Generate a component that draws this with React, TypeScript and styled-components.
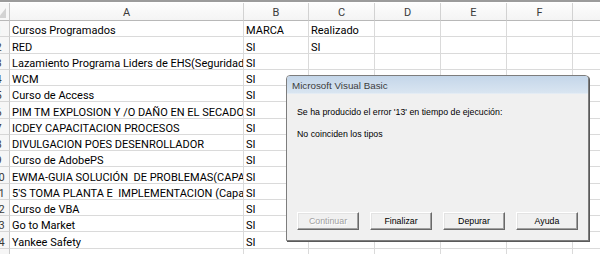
import React from 'react'
import styled, { createGlobalStyle } from 'styled-components'

const GlobalStyle = createGlobalStyle`
  html, body {
    margin: 0;
    padding: 0;
    background: #ffffff;
  }
  body {
    font-family: Roboto, 'Liberation Sans', Arial, sans-serif;
    overflow: hidden;
  }
`

const Sheet = styled.div`
  position: relative;
  width: 600px;
  height: 254px;
  overflow: hidden;
  background: #ffffff;
`

const TopBar = styled.div`
  height: 2px;
  background: #9b9b9b;
  margin-bottom: 1px;
`

const Grid = styled.div`
  display: grid;
  grid-template-columns: 22px 234px 65px 66px 66px 66px 66px 66px;
  grid-template-rows: 18px;
  grid-auto-rows: 16.25px;
  margin-left: -12px;
  width: 651px;
`

const Corner = styled.div`
  display: flex;
  align-items: flex-end;
  justify-content: flex-end;
  padding: 0 3px 2px 0;
  background: #f7f7f7;
  border-right: 1px solid #c9c9c9;
  border-bottom: 1px solid #b8b8b8;
  box-sizing: border-box;
`

const CornerMark = styled.div`
  width: 8px;
  height: 10px;
  background: #d3d3d3;
  clip-path: polygon(100% 0, 100% 100%, 0 100%);
`

const ColHead = styled.div`
  display: flex;
  align-items: center;
  justify-content: center;
  padding-top: 2px;
  font-size: 11px;
  color: #3a3a3a;
  background: linear-gradient(#fdfdfd, #f4f4f4);
  border-right: 1px solid #d2d2d2;
  border-bottom: 1px solid #b8b8b8;
  box-sizing: border-box;
`

const RowHead = styled.div`
  display: flex;
  align-items: flex-end;
  justify-content: center;
  font-size: 11px;
  line-height: 11px;
  color: #3a3a3a;
  background: #f6f6f6;
  border-right: 1px solid #c9c9c9;
  border-bottom: 1px solid #d6d6d6;
  box-sizing: border-box;
`

const Cell = styled.div`
  display: flex;
  align-items: flex-end;
  padding-left: 2px;
  font-size: 11px;
  line-height: 11px;
  color: #000000;
  white-space: pre;
  overflow: hidden;
  border-right: 1px solid #dadada;
  border-bottom: 1px solid #dadada;
  box-sizing: border-box;
`

const Dialog = styled.div`
  position: absolute;
  left: 286px;
  top: 75px;
  width: 303px;
  height: 166px;
  display: flex;
  flex-direction: column;
  box-sizing: border-box;
  border: 1px solid #7d7d7d;
  border-radius: 4px 4px 0 0;
  box-shadow: 1px 1px 0 #5a5a5a;
  background: #f0f0f0;
  overflow: hidden;
  font-family: 'Liberation Sans', Arial, sans-serif;
`

const TitleBar = styled.div`
  height: 18px;
  display: flex;
  align-items: center;
  padding: 1px 0 0 5px;
  box-sizing: border-box;
  font-size: 9.8px;
  color: #3c3c3c;
  background: linear-gradient(#c4d6e9, #d9e5f1);
  border-bottom: 1px solid #e4ecf4;
`

const Body = styled.div`
  flex: 1;
  display: flex;
  flex-direction: column;
  padding: 12px 10px 10px 10px;
  font-size: 8.8px;
  color: #000000;
`

const Message = styled.div<{ gap?: number }>`
  line-height: 12px;
  margin-bottom: ${(p) => p.gap ?? 0}px;
`

const Buttons = styled.div`
  margin-top: auto;
  display: flex;
  gap: 11px;
`

const Button = styled.div<{ disabled?: boolean }>`
  width: 62px;
  height: 18px;
  display: flex;
  align-items: center;
  justify-content: center;
  box-sizing: border-box;
  background: #f0f0f0;
  border-top: 1px solid #ffffff;
  border-left: 1px solid #ffffff;
  border-right: 1px solid #696969;
  border-bottom: 1px solid #696969;
  box-shadow: inset -1px -1px 0 #a0a0a0, inset 1px 1px 0 #e3e3e3;
  font-size: 8.8px;
  color: ${(p) => (p.disabled ? '#a0a0a0' : '#000000')};
  text-shadow: ${(p) => (p.disabled ? '1px 1px 0 #ffffff' : 'none')};
`

const columns = ['A', 'B', 'C', 'D', 'E', 'F', 'G']

const rows: string[][] = [
  ['Cursos Programados', 'MARCA', 'Realizado'],
  ['RED', 'SI', 'SI'],
  ['Lazamiento Programa Liders de EHS(Seguridad)', 'SI'],
  ['WCM', 'SI'],
  ['Curso de Access', 'SI'],
  ['PIM TM EXPLOSION Y /O DAÑO EN EL SECADOR', 'SI'],
  ['ICDEY CAPACITACION PROCESOS', 'SI'],
  ['DIVULGACION POES DESENROLLADOR', 'SI'],
  ['Curso de AdobePS', 'SI'],
  ['EWMA-GUIA SOLUCIÓN  DE PROBLEMAS(CAPACITACION)', 'SI'],
  ["5'S TOMA PLANTA E  IMPLEMENTACION (Capacitación)", 'SI'],
  ['Curso de VBA', 'SI'],
  ['Go to Market', 'SI'],
  ['Yankee Safety', 'SI'],
  [],
]

export default function App() {
  return (
    <Sheet>
      <GlobalStyle />
      <TopBar />
      <Grid>
        <Corner>
          <CornerMark />
        </Corner>
        {columns.map((c) => (
          <ColHead key={c}>{c}</ColHead>
        ))}
        {rows.map((row, i) => (
          <React.Fragment key={i}>
            <RowHead>{i + 1}</RowHead>
            {columns.map((c, j) => (
              <Cell key={c}>{row[j] ?? ''}</Cell>
            ))}
          </React.Fragment>
        ))}
      </Grid>

      <Dialog>
        <TitleBar>Microsoft Visual Basic</TitleBar>
        <Body>
          <Message gap={10}>Se ha producido el error '13' en tiempo de ejecución:</Message>
          <Message>No coinciden los tipos</Message>
          <Buttons>
            <Button disabled>Continuar</Button>
            <Button>Finalizar</Button>
            <Button>Depurar</Button>
            <Button>Ayuda</Button>
          </Buttons>
        </Body>
      </Dialog>
    </Sheet>
  )
}
